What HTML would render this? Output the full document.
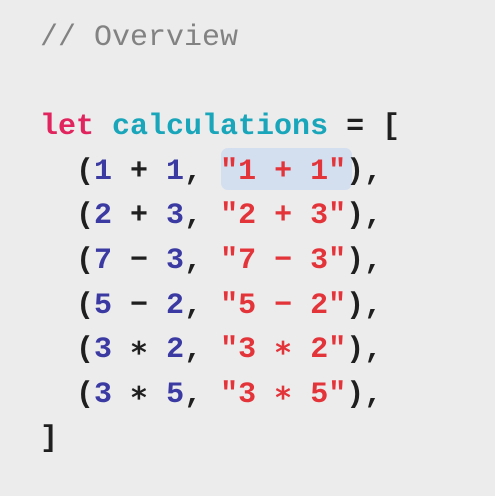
<!DOCTYPE html>
<html><head><style>
html,body{margin:0;padding:0;width:495px;height:496px;background:#ececed;overflow:hidden}
pre{position:absolute;left:40px;top:16px;margin:0;font-family:"Liberation Mono",monospace;font-size:30px;line-height:44.6px;color:#1f1f1f;font-weight:bold}
.c{color:#828282;font-weight:normal}
.k{color:#e2245e}
.t{color:#1aa6ba}
.n{color:#3b3aa3}
.s{color:#e3343a}
.hl{position:absolute;left:221px;top:148px;width:131px;height:42px;background:#d3deef;border-radius:7px}
</style></head><body>
<div class="hl"></div>
<pre><span class="c">// Overview</span>

<span class="k">let</span> <span class="t">calculations</span> = [
  (<span class="n">1</span> + <span class="n">1</span>, <span class="s">"1 + 1"</span>),
  (<span class="n">2</span> + <span class="n">3</span>, <span class="s">"2 + 3"</span>),
  (<span class="n">7</span> − <span class="n">3</span>, <span class="s">"7 − 3"</span>),
  (<span class="n">5</span> − <span class="n">2</span>, <span class="s">"5 − 2"</span>),
  (<span class="n">3</span> ∗ <span class="n">2</span>, <span class="s">"3 ∗ 2"</span>),
  (<span class="n">3</span> ∗ <span class="n">5</span>, <span class="s">"3 ∗ 5"</span>),
]</pre>
</body></html>
